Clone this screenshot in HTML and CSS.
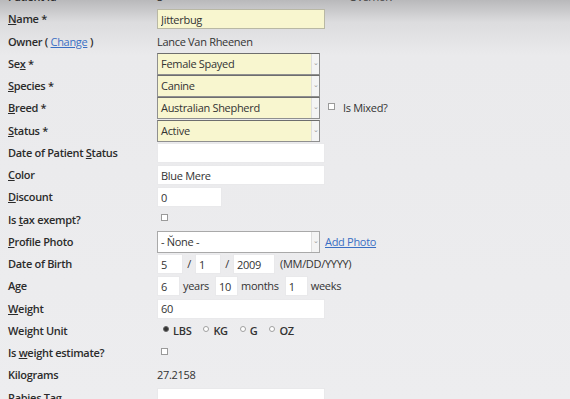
FILE: index.html
```html
<!DOCTYPE html>
<html>
<head>
    <link rel="stylesheet" href="styles.css">
</head>
<body>
  <div id="patientForm">
    <div class="row">
      <label>Patient Id</label>
      <div class="value"><span class="plain">3</span><span class="overnote">Overnor:</span></div>
    </div>
    <div class="row">
      <label><u>N</u>ame *</label>
      <div class="value"><input class="text wide required" value="Jitterbug"></div>
    </div>
    <div class="row">
      <label>Owner ( <a href="#">Change</a> )</label>
      <div class="value"><span class="plain">Lance Van Rheenen</span></div>
    </div>
    <div class="selects">
      <div class="row">
        <label>Se<u>x</u> *</label>
        <div class="value"><span class="select required">Female Spayed</span></div>
      </div>
      <div class="row">
        <label><u>S</u>pecies *</label>
        <div class="value"><span class="select required">Canine</span></div>
      </div>
      <div class="row">
        <label><u>B</u>reed *</label>
        <div class="value"><span class="select required">Australian Shepherd</span><span class="check"></span><span class="plain">Is Mixed?</span></div>
      </div>
      <div class="row">
        <label><u>S</u>tatus *</label>
        <div class="value"><span class="select required">Active</span></div>
      </div>
    </div>
    <div class="row">
      <label>Date of Patient <u>S</u>tatus</label>
      <div class="value"><input class="text wide" value=""></div>
    </div>
    <div class="row">
      <label><u>C</u>olor</label>
      <div class="value"><input class="text wide" value="Blue Mere"></div>
    </div>
    <div class="row">
      <label><u>D</u>iscount</label>
      <div class="value"><input class="text short" value="0"></div>
    </div>
    <div class="row">
      <label>Is <u>t</u>ax exempt?</label>
      <div class="value"><span class="check"></span></div>
    </div>
    <div class="row">
      <label><u>P</u>rofile Photo</label>
      <div class="value"><span class="select">- N&#x306;one -</span><a href="#" class="addPhoto">Add Photo</a></div>
    </div>
    <div class="row">
      <label>Date of Birth</label>
      <div class="value">
        <input class="text tiny" value="5"><span class="plain sep">/</span><input class="text tiny" value="1"><span class="plain sep">/</span><input class="text year" value="2009"><span class="plain hint">(MM/DD/YYYY)</span>
      </div>
    </div>
    <div class="row">
      <label>Age</label>
      <div class="value">
        <input class="text age" value="6"><span class="plain unit">years</span><input class="text age" value="10"><span class="plain unit">months</span><input class="text age" value="1"><span class="plain unit">weeks</span>
      </div>
    </div>
    <div class="row">
      <label><u>W</u>eight</label>
      <div class="value"><input class="text wide" value="60"></div>
    </div>
    <div class="row">
      <label>Weight Unit</label>
      <div class="value">
        <span class="radio on"></span><span class="radioLabel">LBS</span>
        <span class="radio"></span><span class="radioLabel">KG</span>
        <span class="radio"></span><span class="radioLabel">G</span>
        <span class="radio"></span><span class="radioLabel">OZ</span>
      </div>
    </div>
    <div class="row">
      <label>Is <u>w</u>eight estimate?</label>
      <div class="value"><span class="check"></span></div>
    </div>
    <div class="row">
      <label>Kilograms</label>
      <div class="value"><span class="plain">27.2158</span></div>
    </div>
    <div class="row">
      <label>Rabies Tag</label>
      <div class="value"><input class="text wide" value=""></div>
    </div>
  </div>
</body>
</html>
```

FILE: styles.css
```css
html, body {
  height: 100%;
}
body {
  margin: 0;
  overflow: hidden;
  font: 11px/22px "Open Sans", "Noto Sans", Arial, sans-serif;
  letter-spacing: -0.3px;
  color: #333;
  background: linear-gradient(to bottom, #b9b9bb 0, #dcdcde 22px, #eaeaec 55px, #ededef 100%);
}
#patientForm {
  margin-top: -14px;
  padding-left: 8px;
}
.row {
  display: grid;
  grid-template-columns: 149px 1fr;
  height: 22.25px;
  align-items: center;
}
.row label {
  font-weight: 600;
  color: #2b2b2b;
  white-space: nowrap;
}
.row label u {
  text-decoration-thickness: 1px;
  text-underline-offset: 1px;
}
.row label a {
  color: #3a6fc4;
  font-weight: 400;
}
.value {
  display: flex;
  align-items: center;
  height: 100%;
  position: relative;
}
.plain {
  color: #333;
}
.overnote {
  position: absolute;
  left: 192px;
  top: 0;
  color: #444;
}
.text {
  box-sizing: border-box;
  height: 20px;
  margin: 0;
  padding: 0 3px;
  border: 1px solid #e9e9eb;
  background: #fff;
  font: 11px "Open Sans", "Noto Sans", Arial, sans-serif;
  letter-spacing: -0.3px;
  color: #333;
  outline: none;
}
.text.required {
  background: #f8f6cf;
  border-color: #b9b8a4;
}
.wide {
  width: 168px;
}
.short {
  width: 65px;
}
.tiny {
  width: 26px;
}
.year {
  width: 42px;
}
.sep {
  width: 12px;
  text-align: center;
}
.hint {
  margin-left: 5px;
}
.age {
  width: 23px;
}
.unit {
  margin: 0 6px 0 3px;
}
.select {
  box-sizing: border-box;
  position: relative;
  width: 163px;
  height: 22px;
  padding: 0 12px 0 3px;
  border: 1px solid #a9a9a9;
  background: #fff;
  line-height: 20px;
}
.select::after {
  content: "\2304";
  position: absolute;
  right: 0;
  top: 0;
  bottom: 0;
  width: 7px;
  background: #f4f4f4;
  border-left: 1px solid #dedede;
  font-size: 7px;
  line-height: 18px;
  text-align: center;
  color: #999;
}
.select.required {
  background: #f8f6cf;
  border-color: #8f8f8f;
  border-top-color: #6e6e6e;
}
.check {
  display: inline-block;
  box-sizing: border-box;
  width: 7px;
  height: 7px;
  margin: 0 8px 4px 4px;
  border: 1px solid #9a9a9a;
  background: #fff;
}
.select + .check {
  margin-left: 8px;
}
.addPhoto {
  margin-left: 5px;
  color: #3a6fc4;
}
.radio {
  display: inline-block;
  box-sizing: border-box;
  width: 6px;
  height: 6px;
  margin: 0 4px 3px 6px;
  border: 1px solid #a0a0a0;
  border-radius: 50%;
  background: #fff;
}
.radio.on {
  background: #333;
  border-color: #666;
}
.radioLabel {
  font-weight: 600;
  margin-right: 6px;
}
```
